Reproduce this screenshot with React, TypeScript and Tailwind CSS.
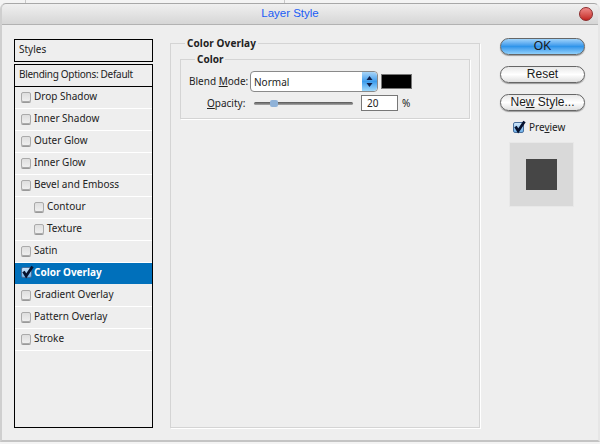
const FONT = "font-['Noto_Sans','Liberation_Sans',sans-serif]";

type StyleRow = { label: string; indent?: boolean; selected?: boolean };

const STYLE_ROWS: StyleRow[] = [
  { label: "Drop Shadow" },
  { label: "Inner Shadow" },
  { label: "Outer Glow" },
  { label: "Inner Glow" },
  { label: "Bevel and Emboss" },
  { label: "Contour", indent: true },
  { label: "Texture", indent: true },
  { label: "Satin" },
  { label: "Color Overlay", selected: true },
  { label: "Gradient Overlay" },
  { label: "Pattern Overlay" },
  { label: "Stroke" },
];

function CheckMark() {
  return (
    <svg viewBox="0 0 12 12" className="h-[12px] w-[12px] overflow-visible">
      <path d="M2.5 4.5 L5.2 9 L11.5 -0.5" fill="none" stroke="#07122e" strokeWidth="2.8" />
    </svg>
  );
}

function Checkbox({ checked }: { checked?: boolean }) {
  if (checked) {
    return (
      <span className="flex h-[11px] w-[11px] shrink-0 items-center justify-center rounded-[2px] border border-[#4a6f9c] bg-gradient-to-b from-[#cfe6fa] to-[#6fb2ea]">
        <CheckMark />
      </span>
    );
  }
  return (
    <span className="block h-[10px] w-[10px] shrink-0 rounded-[2px] border border-[#aaaaaa] bg-gradient-to-b from-[#dedede] to-[#efefef] shadow-[0_1px_0_#999999]" />
  );
}

function StyleListRow({ label, indent, selected }: StyleRow) {
  return (
    <div
      className={`flex h-[22px] items-center pb-[2px] ${indent ? "pl-[19px]" : "pl-[6px]"} ${
        selected
          ? "gap-[2px] border-b border-[#eeeeee] bg-[#0070bb] bg-clip-padding font-bold text-white"
          : "gap-[3px] border-b border-white text-[#222222]"
      }`}
    >
      <Checkbox checked={selected} />
      <span>{label}</span>
    </div>
  );
}

function PillButton({ children, primary }: { children: React.ReactNode; primary?: boolean }) {
  return (
    <button
      className={`h-[17px] w-[85px] rounded-full border border-[#666666] font-['Liberation_Sans',sans-serif] text-[12px] leading-[15px] text-[#1a1a1a] shadow-[0_1px_1px_#999999] ${
        primary
          ? "bg-gradient-to-b from-[#9fd3fa] via-[#2f95ea] to-[#8fd0fb]"
          : "bg-gradient-to-b from-[#e8e8e8] via-white to-[#e0e0e0]"
      }`}
    >
      {children}
    </button>
  );
}

export default function App() {
  return (
    <div className={`${FONT} relative h-[444px] w-[600px] overflow-hidden bg-[#f4f4f4] pt-[3px] text-[10px] text-[#222222]`}>
      <span className="absolute left-[25px] top-0 h-[3px] w-px bg-[#c8c8c8]" />
      <span className="absolute left-[284px] top-0 h-[3px] w-px bg-[#c8c8c8]" />
      <div className="flex h-[439px] flex-col rounded-t-[6px] border-x-2 border-b-2 border-t border-l-[#cfcfcf] border-r-[#e6e6e6] border-b-[#c4c4c4] border-t-[#a8a8a8] bg-[#eeeeee]">
        <div className="relative flex h-[21px] shrink-0 items-center justify-center rounded-t-[6px] border-b border-[#b2b2b2] bg-gradient-to-b from-[#f0f0f0] to-[#d6d6d6] pr-[20px] font-['Liberation_Sans',sans-serif] text-[11.5px] text-[#1a5cf5]">
          Layer Style
          <span className="absolute right-[5px] top-[3px] h-[14px] w-[14px] rounded-full border border-[#8a2a2a] bg-gradient-to-b from-[#ee8888] to-[#c22020]" />
        </div>

        <div className="flex min-h-0 flex-1 pl-[12px] pt-[14px]">
          <div className="flex h-[389px] w-[139px] shrink-0 flex-col gap-[2px]">
            <div className="flex h-[23px] items-center border border-black pb-[2px] pl-[4px]">Styles</div>
            <div className="flex-1 border border-black">
              <div className="flex h-[22px] items-center border-b border-black pb-[2px] pl-[4px] tracking-[-0.3px]">
                Blending Options: Default
              </div>
              {STYLE_ROWS.map((row) => (
                <StyleListRow key={row.label} {...row} />
              ))}
            </div>
          </div>

          <fieldset className="-mt-[2px] ml-[17px] h-[391px] w-[310px] shrink-0 border border-[#d4d4d4] px-[9px] shadow-[1px_1px_0_#ffffff]">
            <legend className="ml-[5px] px-[2px] text-[10px] leading-[12px] font-bold tracking-[0.1px]">Color Overlay</legend>
            <fieldset className="mt-[4px] h-[66px] border border-[#d4d4d4] shadow-[1px_1px_0_#ffffff]">
              <legend className="ml-[14px] px-[2px] text-[10px] leading-[12px] font-bold">Color</legend>
              <div className="mt-[6px] flex items-center pl-[8px]">
                <span className="w-[61px]">
                  Blend <u>M</u>ode:
                </span>
                <div className="flex h-[21px] w-[128px] items-stretch rounded-[4px] border border-[#8a8a8a] bg-white">
                  <span className="flex-1 pl-[3px] text-[10px] leading-[20px]">Normal</span>
                  <span className="flex w-[15px] flex-col items-center justify-center rounded-r-[4px] bg-gradient-to-b from-[#a8d5f8] via-[#3b9cec] to-[#9dd8fb]">
                    <svg viewBox="0 0 7 13" className="h-[13px] w-[7px]">
                      <path d="M3.5 1 L6.5 5 H0.5 Z M3.5 12 L6.5 8 H0.5 Z" fill="#10204a" />
                    </svg>
                  </span>
                </div>
                <span className="ml-[3px] h-[15px] w-[31px] border border-[#777777] bg-black" />
              </div>
              <div className="flex items-center pl-[26px] pt-[3px]">
                <span className="w-[47px]">
                  <u>O</u>pacity:
                </span>
                <div className="relative mr-[8px] h-[3px] w-[99px] rounded-full bg-gradient-to-b from-[#555555] to-[#aaaaaa]">
                  <span className="absolute left-[16px] top-[-2px] h-[7px] w-[8px] rounded-[2px] bg-[#8fb2d8]" />
                </div>
                <input
                  readOnly
                  value="20"
                  className="h-[16px] w-[37px] border border-[#777777] bg-white pl-[5px] text-[10px] outline-none"
                />
                <span className="ml-[4px]">%</span>
              </div>
            </fieldset>
          </fieldset>

          <div className="-mt-[1px] ml-[20px] flex w-[85px] shrink-0 flex-col items-start">
            <div className="flex flex-col gap-[11px]">
              <PillButton primary>OK</PillButton>
              <PillButton>Reset</PillButton>
              <PillButton>
                Ne<u>w</u> Style...
              </PillButton>
            </div>
            <div className="mt-[9px] flex items-center gap-[5px] pl-[13px]">
              <Checkbox checked />
              <span>
                Pre<u>v</u>iew
              </span>
            </div>
            <div className="ml-[9px] mt-[7px] flex h-[65px] w-[65px] items-center justify-center border border-[#e8e8e8] bg-[#d9d9d9]">
              <span className="h-[31px] w-[31px] bg-[#464646]" />
            </div>
          </div>
        </div>
      </div>
    </div>
  );
}
